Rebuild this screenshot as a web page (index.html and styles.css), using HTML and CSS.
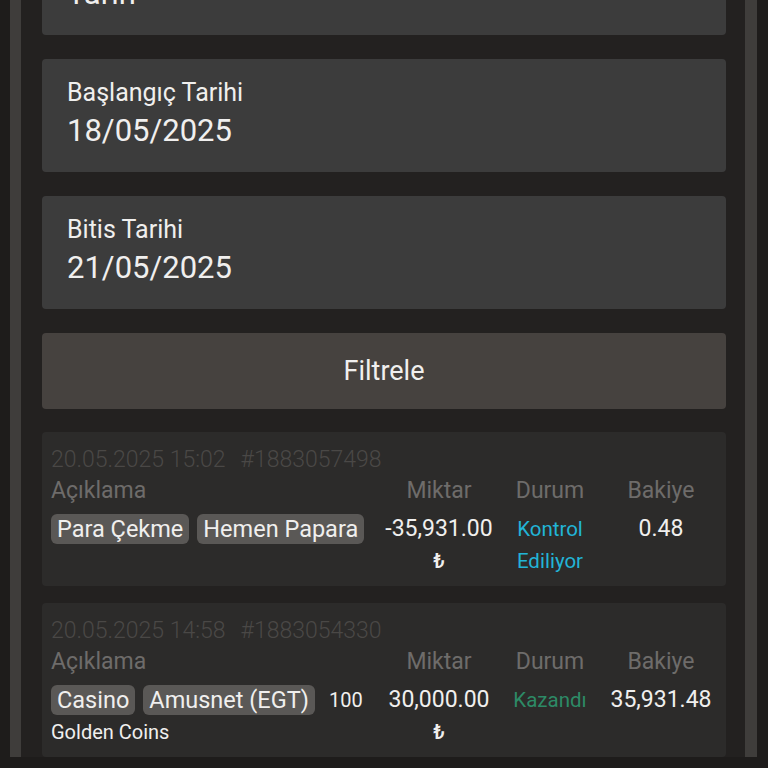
FILE: index.html
```html
<!DOCTYPE html>
<html lang="tr">
<head>
<meta charset="utf-8">
<title>Hesap Geçmişi</title>
<link rel="stylesheet" href="styles.css">
</head>
<body>
<div class="frame">
  <div class="form">
    <div class="field">
      <div class="label">Tarih Aralığı</div>
      <div class="value">Tarih</div>
    </div>
    <div class="field">
      <div class="label">Başlangıç Tarihi</div>
      <div class="value">18/05/2025</div>
    </div>
    <div class="field">
      <div class="label">Bitis Tarihi</div>
      <div class="value">21/05/2025</div>
    </div>
    <button class="btn">Filtrele</button>
  </div>

  <div class="list">
    <div class="tx">
      <div class="meta"><span class="date">20.05.2025 15:02</span><span>#1883057498</span></div>
      <div class="grid">
        <div class="head left">Açıklama</div>
        <div class="head">Miktar</div>
        <div class="head">Durum</div>
        <div class="head">Bakiye</div>
        <div class="desc"><span class="chip">Para Çekme</span><span class="chip">Hemen Papara</span></div>
        <div class="amt">-35,931.00<span class="cur">₺</span></div>
        <div class="status pending">Kontrol Ediliyor</div>
        <div class="bal">0.48</div>
      </div>
    </div>

    <div class="tx">
      <div class="meta"><span class="date">20.05.2025 14:58</span><span>#1883054330</span></div>
      <div class="grid">
        <div class="head left">Açıklama</div>
        <div class="head">Miktar</div>
        <div class="head">Durum</div>
        <div class="head">Bakiye</div>
        <div class="desc"><span class="chip">Casino</span><span class="chip">Amusnet (EGT)</span><span class="extra">100 Golden Coins</span></div>
        <div class="amt">30,000.00<span class="cur">₺</span></div>
        <div class="status won">Kazandı</div>
        <div class="bal">35,931.48</div>
      </div>
    </div>
  </div>
</div>
</body>
</html>
```

FILE: styles.css
```css
* { box-sizing: border-box; }

html, body {
  margin: 0;
  height: 100%;
  overflow: hidden;
  background: #1e1c1b;
  font-family: Roboto, "Noto Sans", sans-serif;
  color: #f0efee;
}

.frame {
  margin-left: 10px;
  width: 747px;
  min-height: 100%;
  background: #232120;
  border-left: 11px solid #3f3d3b;
  border-right: 12px solid #3f3d3b;
  padding: 0 19px 0 21px;
}

.form {
  display: flex;
  flex-direction: column;
  gap: 24px;
  margin-top: -78px;
}

.field {
  background: #3c3c3c;
  border-radius: 4px;
  padding: 18px 25px 19px;
}

.label {
  font-size: 25px;
  line-height: 32px;
}

.value {
  font-size: 31px;
  line-height: 44px;
}

.btn {
  display: block;
  width: 100%;
  height: 76px;
  border: 0;
  border-radius: 4px;
  background: #46423f;
  color: #f0efee;
  font-family: Roboto, "Noto Sans", sans-serif;
  font-size: 27px;
}

.list {
  display: flex;
  flex-direction: column;
  gap: 17px;
  margin-top: 23px;
}

.tx {
  background: #2c2b2a;
  border-radius: 4px;
  padding: 12px 4px 9px 9px;
}

.meta {
  font-size: 23px;
  font-weight: 300;
  line-height: 31px;
  color: #4a4846;
  white-space: nowrap;
}

.meta .date { margin-right: 15px; }

.grid {
  display: grid;
  grid-template-columns: 1fr 122px 100px 122px;
  row-gap: 7px;
}

.head {
  font-size: 23px;
  line-height: 31px;
  color: #6e6c6a;
  text-align: center;
}

.head.left { text-align: left; }

.desc {
  font-size: 20px;
  line-height: 32px;
}

.chip {
  display: inline-block;
  vertical-align: top;
  background: #5a5856;
  border-radius: 6px;
  padding: 0 6px;
  margin-top: 1px;
  font-size: 23.5px;
  line-height: 30px;
}

.chip + .chip { margin-left: 8px; }

.extra { margin-left: 14px; }

.amt, .bal {
  font-size: 23px;
  line-height: 32px;
  text-align: center;
}

.cur {
  display: block;
  font-size: 20px;
  font-weight: 500;
}

.status {
  font-size: 20.5px;
  line-height: 32px;
  text-align: center;
}

.pending { color: #22b4d6; }
.won { color: #2d8a66; }
```
